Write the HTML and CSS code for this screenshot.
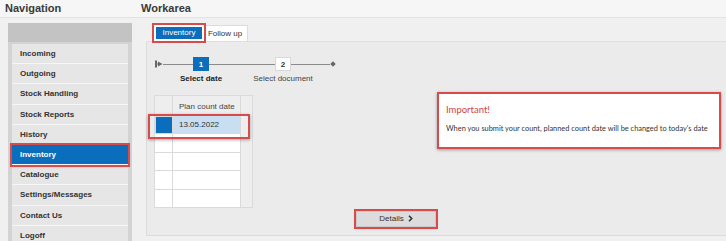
FILE: index.html
```html
<!DOCTYPE html>
<html>
    <head>
        <title>Inventory</title>
        <meta charset="utf-8">
        <link rel="stylesheet" href="styles.css">
    </head>
    <body>
        <header class="top">
            <h1 class="title nav-title">Navigation</h1>
            <h1 class="title">Workarea</h1>
        </header>
        <div class="main">
            <nav class="nav">
                <div class="nav-head"></div>
                <ul class="menu">
                    <li>Incoming</li>
                    <li>Outgoing</li>
                    <li>Stock Handling</li>
                    <li>Stock Reports</li>
                    <li>History</li>
                    <li class="active">Inventory</li>
                    <li>Catalogue</li>
                    <li>Settings/Messages</li>
                    <li>Contact Us</li>
                    <li>Logoff</li>
                </ul>
            </nav>
            <section class="work">
                <div class="tabs">
                    <div class="tab current">Inventory</div>
                    <div class="tab">Follow up</div>
                </div>
                <div class="panel">
                    <div class="steps">
                        <svg class="start" width="8" height="8" viewBox="0 0 8 8">
                            <rect x="0" y="0.5" width="2" height="7" fill="#666"/>
                            <path d="M3 1.5 L7.5 4 L3 6.5 Z" fill="#666"/>
                            <rect x="2" y="3.5" width="2" height="1" fill="#666"/>
                        </svg>
                        <div class="line first"></div>
                        <div class="step">
                            <div class="num on">1</div>
                            <div class="label bold">Select date</div>
                        </div>
                        <div class="line second"></div>
                        <div class="step">
                            <div class="num">2</div>
                            <div class="label">Select document</div>
                        </div>
                        <div class="line third"></div>
                        <svg class="end" width="6" height="6" viewBox="0 0 6 6">
                            <path d="M3 0.3 L5.7 3 L3 5.7 L0.3 3 Z" fill="#666"/>
                        </svg>
                    </div>
                    <div class="middle">
                        <div class="grid-wrap">
                            <div class="grid">
                                <div class="cell head"></div>
                                <div class="cell head">Plan count date</div>
                                <div class="cell side"></div>

                                <div class="cell pick"></div>
                                <div class="cell chosen">13.05.2022</div>

                                <div class="cell"></div>
                                <div class="cell"></div>

                                <div class="cell"></div>
                                <div class="cell"></div>

                                <div class="cell"></div>
                                <div class="cell"></div>

                                <div class="cell"></div>
                                <div class="cell"></div>
                            </div>
                            <div class="mark"></div>
                        </div>
                        <div class="notice">
                            <div class="notice-title">Important!</div>
                            <div class="notice-text">When you submit your count, planned count date will be changed to today's date</div>
                        </div>
                    </div>
                    <button class="details">Details
                        <svg width="5" height="7" viewBox="0 0 5 7"><path d="M1 0.8 L3.7 3.5 L1 6.2" fill="none" stroke="#333" stroke-width="1.6"/></svg>
                    </button>
                </div>
            </section>
        </div>
    </body>
</html>
```

FILE: styles.css
```css
body{
    margin: 0;
    background-color: #f0f0f0;
    font-family: "Liberation Sans", Arial, sans-serif;
    color: #333;
    overflow: hidden;
}
.top{
    display: flex;
    height: 17px;
    background-color: #f6f6f6;
    border-bottom: 1px solid #e2e2e2;
}
.title{
    margin: 0;
    font-size: 11px;
    line-height: 17px;
    font-weight: bold;
    color: #3a3a3a;
}
.nav-title{
    width: 136px;
    padding-left: 5px;
}
.main{
    display: flex;
    margin-top: 5px;
}
.nav{
    width: 124px;
    margin-left: 8px;
    background-color: #d3d3d3;
}
.nav-head{
    height: 19px;
    background-color: #c3c3c3;
}
.menu{
    list-style: none;
    margin: 2px 4px 0 4px;
    padding: 0;
}
.menu li{
    height: 19.2px;
    line-height: 19.2px;
    padding-left: 8px;
    font-size: 8px;
    font-weight: bold;
    color: #333;
    background-color: #e6e6e6;
    border-bottom: 1px solid #f6f6f6;
}
.menu li.active{
    position: relative;
    background-color: #0a6ebd;
    color: white;
    outline: 2px solid #d64b4b;
    box-shadow: 0 1px 3px rgba(0,0,0,0.4);
}
.work{
    flex: 1;
    margin-left: 14px;
}
.tabs{
    display: flex;
    align-items: flex-end;
    height: 18px;
    padding-left: 10px;
}
.tab{
    height: 15px;
    line-height: 15px;
    padding: 0 5px;
    font-size: 8px;
    background-color: white;
    border: 1px solid #dcdcdc;
    border-bottom: none;
    color: #333;
}
.tab.current{
    position: relative;
    z-index: 1;
    height: 12px;
    line-height: 12px;
    margin-bottom: 2px;
    padding: 0 6.5px;
    border: none;
    background-color: #0a6ebd;
    color: white;
    outline: 2px solid #d64b4b;
    outline-offset: 2px;
    box-shadow: 0 0 0 2px white;
}
.panel{
    height: 193px;
    padding-left: 7px;
    background-color: #ebebeb;
    border-top: 1px solid #dedede;
    border-left: 1px solid #dcdcdc;
    border-bottom: 1px solid #dcdcdc;
}
.steps{
    display: flex;
    align-items: flex-start;
    padding-top: 15px;
    height: 28px;
}
.start{
    margin: 3px 0 0 1px;
}
.end{
    margin-top: 4px;
}
.line{
    height: 1px;
    margin-top: 6.5px;
    background-color: #8a8a8a;
}
.line.first{
    width: 30px;
}
.line.second{
    width: 66px;
}
.line.third{
    width: 39px;
}
.step{
    display: flex;
    flex-direction: column;
    align-items: center;
    width: 16px;
}
.num{
    width: 16px;
    height: 14px;
    line-height: 14px;
    box-sizing: border-box;
    text-align: center;
    font-size: 8px;
    font-weight: bold;
    background-color: white;
    color: #333;
    border: 1px solid #d8d8d8;
}
.num.on{
    background-color: #0a6ebd;
    border-color: #0a6ebd;
    color: white;
}
.label{
    margin-top: 3px;
    white-space: nowrap;
    font-size: 8px;
    line-height: 10px;
    color: #444;
}
.label.bold{
    font-weight: bold;
    color: #222;
}
.middle{
    display: flex;
    align-items: flex-start;
    margin-top: 10px;
}
.grid-wrap{
    position: relative;
}
.grid{
    display: grid;
    grid-template-columns: 17px 67px 11px;
    grid-template-rows: 19px repeat(5, 17.4px);
    gap: 1px;
    padding: 1px;
    background-color: #dadada;
}
.cell{
    background-color: white;
    font-size: 8px;
    line-height: 17.4px;
    padding-left: 6px;
    color: #444;
}
.cell.head{
    background-color: #eeeeee;
    line-height: 22px;
}
.cell.side{
    grid-column: 3;
    grid-row: 1 / 7;
    background-color: #eeeeee;
}
.cell.pick{
    background-color: #0a6ebd;
    margin: 1px 0 0 1px;
}
.cell.chosen{
    background-color: #c9def0;
    color: #333;
}
.mark{
    position: absolute;
    left: -6px;
    top: 19px;
    width: 98px;
    height: 21px;
    border: 2px solid #d64b4b;
    box-shadow: 0 1px 3px rgba(0,0,0,0.35);
}
.notice{
    margin: -3px 5px 0 auto;
    padding-left: 7px;
    box-sizing: border-box;
    width: 284px;
    height: 57px;
    background-color: white;
    border: 2px solid #d64b4b;
    box-shadow: 0 1px 3px rgba(0,0,0,0.35);
    font-family: Lato, "Liberation Sans", sans-serif;
}
.notice-title{
    margin-top: 10px;
    font-size: 9.5px;
    line-height: 12px;
    color: #d04444;
}
.notice-text{
    margin-top: 8px;
    font-size: 7.4px;
    line-height: 10px;
    color: #333;
    white-space: nowrap;
}
.details{
    display: flex;
    align-items: center;
    justify-content: center;
    gap: 4px;
    width: 80px;
    height: 16px;
    margin: 3px 0 0 202px;
    padding: 0;
    font-family: "Liberation Sans", Arial, sans-serif;
    font-size: 8px;
    color: #333;
    background-color: #dcdcdc;
    border: 1px solid #cacaca;
    outline: 2px solid #d64b4b;
    box-shadow: 0 1px 3px rgba(0,0,0,0.4);
}
```
